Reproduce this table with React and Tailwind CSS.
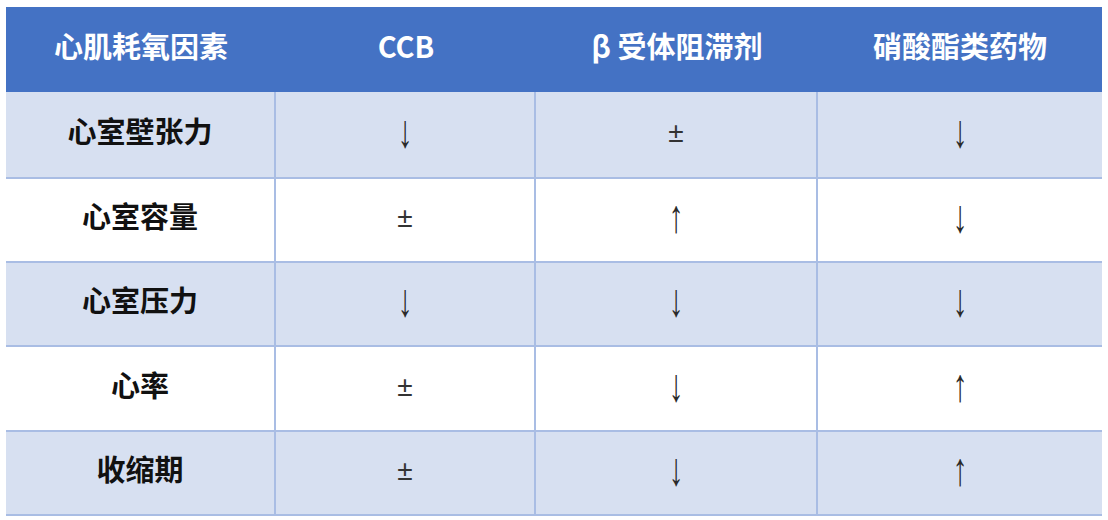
const columns = ["心肌耗氧因素", "CCB", "β 受体阻滞剂", "硝酸酯类药物"];

const rows = [
  { name: "心室壁张力", values: ["↓", "±", "↓"], h: "h-[85px]" },
  { name: "心室容量", values: ["±", "↑", "↓"], h: "h-[84px]" },
  { name: "心室压力", values: ["↓", "↓", "↓"], h: "h-[84px]" },
  { name: "心率", values: ["±", "↓", "↑"], h: "h-[85px]" },
  { name: "收缩期", values: ["±", "↓", "↑"], h: "h-[84px]" },
];

const grid = "grid grid-cols-[270px_260px_282px_284px]";
const font = "font-['Noto_Sans_CJK_SC','Liberation_Sans',sans-serif]";

function Mark({ value }) {
  if (value === "±") {
    return (
      <span className="inline-block text-[28px] leading-none text-[#333] font-['Liberation_Sans',sans-serif] translate-y-[2px]">
        ±
      </span>
    );
  }
  return (
    <span className="inline-block text-[30px] leading-none text-[#2a2a2a] font-['Liberation_Serif',serif] scale-y-[1.55]">
      {value}
    </span>
  );
}

export default function App() {
  return (
    <div className={`w-[1108px] h-[520px] bg-white pl-[6px] pt-[7px] ${font}`}>
      <div className="w-[1096px] border-x-2 border-b-2 border-[#a9bde4]">
        <div className={`${grid} h-[85px] bg-[#4472c4] -mx-[2px] w-[1096px]`}>
          {columns.map((c) => (
            <div key={c} className="flex items-center justify-center pb-[7px] text-white font-bold text-[29px]">
              {c}
            </div>
          ))}
        </div>
        {rows.map((r, i) => (
          <div
            key={r.name}
            className={`${grid} ${r.h} -mx-[2px] w-[1096px] ${i > 0 ? "border-t-2 border-[#a9bde4]" : ""} ${
              i % 2 === 0 ? "bg-[#d7e0f1]" : "bg-white"
            }`}
          >
            <div className="flex items-center justify-center pb-[8px] border-r-2 border-[#a9bde4] font-bold text-[29px] text-[#111]">
              {r.name}
            </div>
            {r.values.map((v, j) => (
              <div
                key={j}
                className={`flex items-center justify-center pb-[8px] ${j < 2 ? "border-r-2 border-[#a9bde4]" : ""}`}
              >
                <Mark value={v} />
              </div>
            ))}
          </div>
        ))}
      </div>
    </div>
  );
}
